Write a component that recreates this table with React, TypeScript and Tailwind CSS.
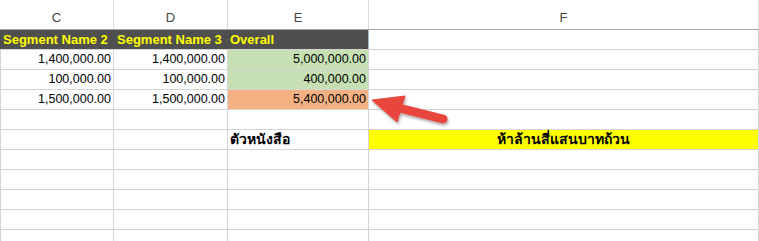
import React from "react";

const cols = ["w-[113px]", "w-[114px]", "w-[141px]", "w-[390px]"];

function Row({ children, h = "h-[20px]" }: { children: React.ReactNode; h?: string }) {
  return <div className={`flex ${h} border-b border-[#d4d4d4] border-l`}>{children}</div>;
}

function Cell({ i, className = "", children }: { i: number; className?: string; children?: React.ReactNode }) {
  return (
    <div className={`${cols[i]} shrink-0 border-r border-[#d4d4d4] flex items-center overflow-hidden whitespace-nowrap ${className}`}>
      {children}
    </div>
  );
}

const data = [
  ["1,400,000.00", "1,400,000.00", "5,000,000.00", "bg-[#c6e0b4]"],
  ["100,000.00", "100,000.00", "400,000.00", "bg-[#c6e0b4]"],
  ["1,500,000.00", "1,500,000.00", "5,400,000.00", "bg-[#f4b183]"],
];

const hdrCols = ["w-[114px]", "w-[114px]", "w-[141px]", "w-[390px]"];

export default function App() {
  return (
    <div className="relative w-[759px] h-[241px] overflow-hidden bg-white text-black" style={{ fontFamily: '"Liberation Sans", Arial, sans-serif' }}>
      {/* column header */}
      <div className="flex h-[30px] border-b border-[#a6a6a6] bg-white">
        {["C", "D", "E", "F"].map((l, i) => (
          <div key={l} className={`${hdrCols[i]} shrink-0 border-r border-[#dadada] flex items-center justify-center text-[13px] text-[#444] pt-[6px]`}>
            {l}
          </div>
        ))}
      </div>
      {/* dark title row */}
      <div className="flex h-[20px] border-b border-[#d4d4d4]">
        <div className="w-[369px] shrink-0 bg-[#4f4f4f] border-r border-[#9fb6d6] flex items-center text-[13px] font-bold text-[#ffff00]">
          <span className="w-[114px] pl-[3px]">Segment Name 2</span>
          <span className="w-[114px] pl-[3px]">Segment Name 3</span>
          <span className="pl-[2px]">Overall</span>
        </div>
        <div className="w-[390px] shrink-0 border-r border-[#d4d4d4]" />
      </div>
      {data.map((r) => (
        <Row key={r[2]}>
          <Cell i={0} className="justify-end pr-[2px] text-[12.5px]">{r[0]}</Cell>
          <Cell i={1} className="justify-end pr-[2px] text-[12.5px]">{r[1]}</Cell>
          <Cell i={2} className={`justify-end pr-[2px] text-[12.5px] ${r[3]}`}>{r[2]}</Cell>
          <Cell i={3} />
        </Row>
      ))}
      <Row>
        <Cell i={0} />
        <Cell i={1} />
        <Cell i={2} />
        <Cell i={3} />
      </Row>
      <Row>
        <Cell i={0} />
        <Cell i={1} />
        <Cell i={2} className="pl-[2px] text-[14px] font-bold">ตัวหนังสือ</Cell>
        <Cell i={3} className="justify-center bg-[#ffff00] text-[14px] font-bold">ห้าล้านสี่แสนบาทถ้วน</Cell>
      </Row>
      {[0, 1, 2, 3, 4].map((k) => (
        <Row key={k}>
          <Cell i={0} />
          <Cell i={1} />
          <Cell i={2} />
          <Cell i={3} />
        </Row>
      ))}
      {/* arrow */}
      <svg className="absolute left-0 top-0 pointer-events-none" width="759" height="241">
        <defs>
          <filter id="sh" x="-20%" y="-20%" width="140%" height="140%">
            <feDropShadow dx="1" dy="2" stdDeviation="1.5" floodColor="#000" floodOpacity="0.35" />
          </filter>
        </defs>
        <g filter="url(#sh)" fill="#e8453c" stroke="#e8453c">
          <line x1="399" y1="108" x2="443" y2="119" strokeWidth="9" strokeLinecap="round" />
          <polygon points="372,100 405,96 397,122" strokeWidth="1" strokeLinejoin="round" />
        </g>
      </svg>
    </div>
  );
}
